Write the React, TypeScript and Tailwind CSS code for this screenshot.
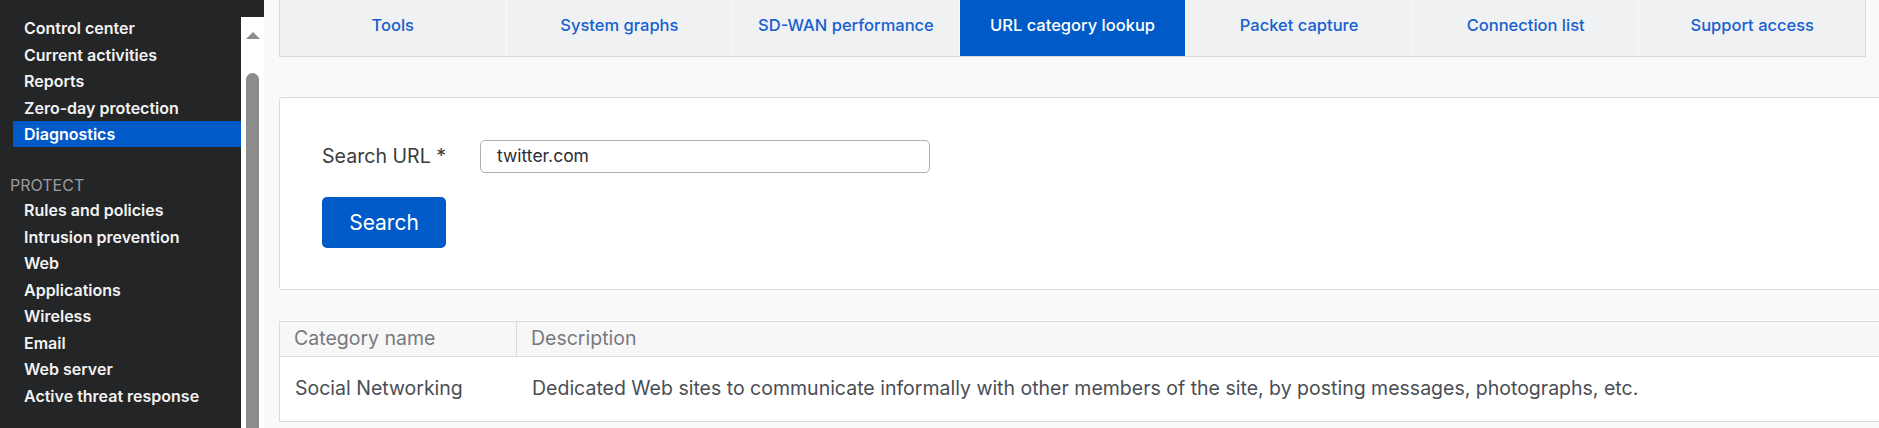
import React from "react";

const monitor = ["Control center", "Current activities", "Reports", "Zero-day protection", "Diagnostics"];
const protect = [
  "Rules and policies",
  "Intrusion prevention",
  "Web",
  "Applications",
  "Wireless",
  "Email",
  "Web server",
  "Active threat response",
];
const tabs = [
  "Tools",
  "System graphs",
  "SD-WAN performance",
  "URL category lookup",
  "Packet capture",
  "Connection list",
  "Support access",
];

function NavItem({ label, active }: { label: string; active?: boolean }) {
  return (
    <div
      className={
        "ml-[13px] flex h-[26.5px] items-center pl-[11px] text-[16px] font-semibold whitespace-nowrap " +
        (active ? "bg-[#005bc8] text-white" : "text-[#f2f2f2]")
      }
    >
      {label}
    </div>
  );
}

export default function App() {
  return (
    <div
      className="flex h-[428px] w-[1879px] overflow-hidden bg-[#f9f9f9]"
      style={{ fontFamily: "Inter, 'Noto Sans', sans-serif" }}
    >
      {/* Sidebar */}
      <div className="flex w-[241px] shrink-0 flex-col bg-[#242527] pt-[14.75px]">
        {monitor.map((m) => (
          <NavItem key={m} label={m} active={m === "Diagnostics"} />
        ))}
        <div className="mt-[25.75px] flex h-[24px] items-center pl-[10px] text-[16px] text-[#9b9b9b]">PROTECT</div>
        {protect.map((m) => (
          <NavItem key={m} label={m} />
        ))}
      </div>

      {/* Scrollbar */}
      <div className="flex w-[23px] shrink-0 flex-col bg-[#242527]">
        <div className="h-[17px]" />
        <div className="flex flex-1 flex-col items-center bg-white">
          <div className="mt-[15px] h-0 w-0 border-x-[7.5px] border-b-[7px] border-x-transparent border-b-[#8c8c8c]" />
          <div className="mt-[34px] w-[13px] flex-1 rounded-t-[7px] bg-[#8c8c8c]" />
        </div>
      </div>

      {/* Main */}
      <div className="flex min-w-0 flex-1 flex-col pl-[15px]">
        {/* Tabs */}
        <div className="flex h-[57px] w-[1587px] shrink-0 border-b border-l border-r border-[#d9dadc] bg-[#f0f1f3]">
          {tabs.map((t, i) => {
            const active = t === "URL category lookup";
            return (
              <div
                key={t}
                className={
                  "flex flex-1 items-center justify-center pb-[5px] text-[16.5px] font-medium whitespace-nowrap " +
                  (i > 0 ? "border-l border-[#fafafa] " : "") +
                  (active ? "bg-[#005bc8] text-white" : "text-[#1661cf]")
                }
              >
                {t}
              </div>
            );
          })}
        </div>

        {/* Search card */}
        <div className="mt-[40px] flex h-[193px] w-[1700px] shrink-0 flex-col rounded-l-[3px] border border-[#dcdcdc] bg-white pl-[42px] pt-[42px]">
          <div className="flex h-[33px] items-center">
            <div className="w-[158px] text-[19.6px] text-[#383c40]">Search URL *</div>
            <div className="flex h-[33px] w-[450px] items-center rounded-[5px] border border-[#a9b0b8] bg-white pl-[16px] text-[17.5px] text-[#2a2e33]">
              twitter.com
            </div>
          </div>
          <button className="mt-[24px] flex h-[51px] w-[124px] items-center justify-center rounded-[5px] bg-[#005bc8] text-[21px] text-white">
            Search
          </button>
        </div>

        {/* Table */}
        <div className="mt-[31px] w-[1700px] shrink-0 border-y border-l border-[#dcdcdc] bg-white">
          <div className="flex h-[35px] border-b border-[#dcdcdc] bg-[#f7f7f7] text-[19.5px] text-[#767a7f]">
            <div className="flex w-[237px] items-center border-r border-[#dcdcdc] pl-[14px]">Category name</div>
            <div className="flex flex-1 items-center pl-[14px]">Description</div>
          </div>
          <div className="flex h-[64px] text-[19.5px] text-[#4a4e54]">
            <div className="flex w-[238px] items-center pl-[15px] whitespace-nowrap">Social Networking</div>
            <div className="flex flex-1 items-center pl-[14px] whitespace-nowrap">
              Dedicated Web sites to communicate informally with other members of the site, by posting messages,
              photographs, etc.
            </div>
          </div>
        </div>
      </div>
    </div>
  );
}
